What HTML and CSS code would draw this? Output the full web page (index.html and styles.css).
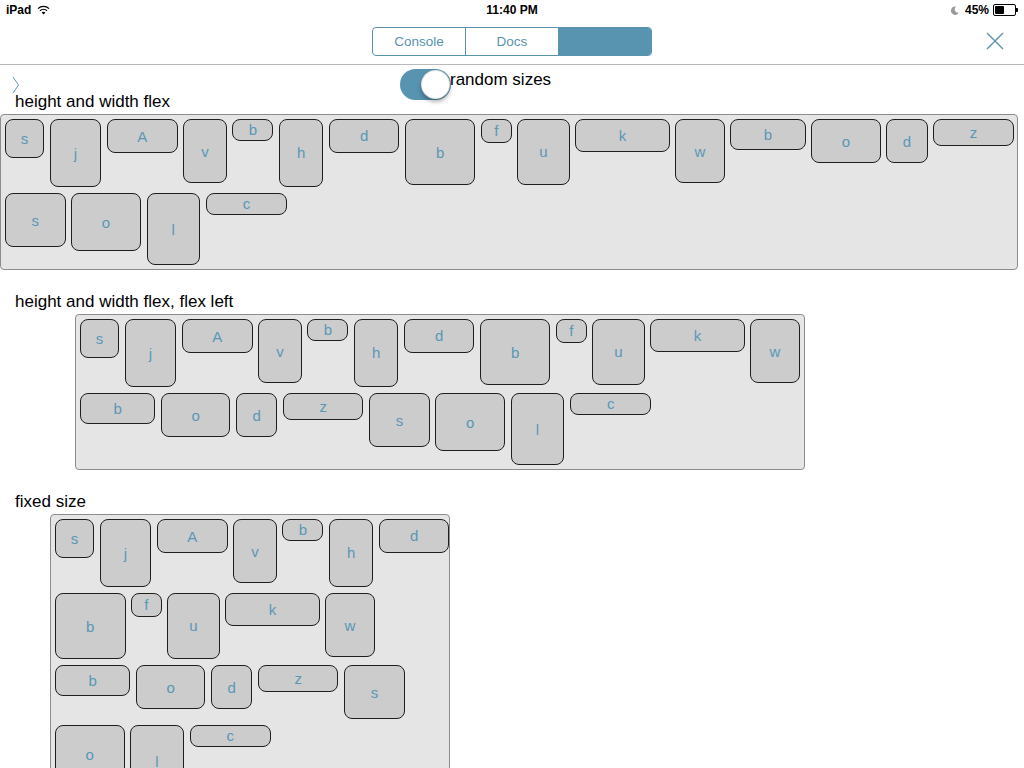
FILE: index.html
```html
<!DOCTYPE html>
<html>
<head>
<meta charset="utf-8">
<link rel="stylesheet" href="styles.css">
</head>
<body>
<div class="status">
  <div class="st-left">
    <span class="st-txt">iPad</span>
    <svg class="wifi" width="13" height="10" viewBox="0 0 13 10">
      <path d="M1 3.6 A8 8 0 0 1 12 3.6" fill="none" stroke="#000" stroke-width="1.3"/>
      <path d="M3 5.7 A5.2 5.2 0 0 1 10 5.7" fill="none" stroke="#000" stroke-width="1.3"/>
      <path d="M6.5 9.6 L4.6 7.6 A2.8 2.8 0 0 1 8.4 7.6 Z" fill="#000"/>
    </svg>
  </div>
  <div class="st-txt st-time">11:40 PM</div>
  <div class="st-right">
    <svg class="moon" width="8" height="9" viewBox="0 0 8 9">
      <path d="M5 0.5 A4.2 4.2 0 1 0 7.8 6.8 A3.6 3.6 0 0 1 5 0.5 Z" fill="#9a9a9a"/>
    </svg>
    <span class="st-txt">45%</span>
    <span class="battery"><span class="batt-fill"></span></span><span class="batt-nub"></span>
  </div>
</div>
<div class="nav">
  <div></div>
  <div class="seg">
    <div class="seg-item">Console</div>
    <div class="seg-item">Docs</div>
    <div class="seg-item seg-on"></div>
  </div>
  <div class="nav-right">
    <svg class="close" width="18" height="18" viewBox="0 0 18 18">
      <path d="M1 1 L17 17 M17 1 L1 17" stroke="#5893b0" stroke-width="1.4" fill="none"/>
    </svg>
  </div>
</div>
<div class="topbar">
  <svg class="chev" width="8" height="18" viewBox="0 0 8 18">
    <path d="M1 1 L6.5 9 L1 17" fill="none" stroke="#5a9abb" stroke-width="1"/>
  </svg>
  <div class="toggle-row">
    <div class="switch"><div class="knob"></div></div>
    <span class="toggle-label">random sizes</span>
  </div>
</div>

<div class="label first">height and width flex</div>
<div class="box box1">
  <div class="row">
    <div class="it s">s</div><div class="it j">j</div><div class="it A">A</div><div class="it v">v</div><div class="it b1">b</div><div class="it h">h</div><div class="it d1">d</div><div class="it b2">b</div><div class="it f">f</div><div class="it u">u</div><div class="it k">k</div><div class="it w">w</div><div class="it b3">b</div><div class="it o1">o</div><div class="it d2">d</div><div class="it z">z</div>
  </div>
  <div class="row">
    <div class="it s2">s</div><div class="it o2">o</div><div class="it l">l</div><div class="it c">c</div>
  </div>
</div>

<div class="label">height and width flex, flex left</div>
<div class="box box2">
  <div class="row">
    <div class="it s">s</div><div class="it j">j</div><div class="it A">A</div><div class="it v">v</div><div class="it b1">b</div><div class="it h">h</div><div class="it d1">d</div><div class="it b2">b</div><div class="it f">f</div><div class="it u">u</div><div class="it k">k</div><div class="it w">w</div>
  </div>
  <div class="row">
    <div class="it b3">b</div><div class="it o1">o</div><div class="it d2">d</div><div class="it z">z</div><div class="it s2">s</div><div class="it o2">o</div><div class="it l">l</div><div class="it c">c</div>
  </div>
</div>

<div class="label">fixed size</div>
<div class="box box3">
  <div class="row">
    <div class="it s">s</div><div class="it j">j</div><div class="it A">A</div><div class="it v">v</div><div class="it b1">b</div><div class="it h">h</div><div class="it d1">d</div>
  </div>
  <div class="row">
    <div class="it b2">b</div><div class="it f">f</div><div class="it u">u</div><div class="it k">k</div><div class="it w">w</div>
  </div>
  <div class="row">
    <div class="it b3">b</div><div class="it o1">o</div><div class="it d2">d</div><div class="it z">z</div><div class="it s2">s</div>
  </div>
  <div class="row">
    <div class="it o2">o</div><div class="it l">l</div><div class="it c">c</div>
  </div>
</div>
</body>
</html>
```

FILE: styles.css
```css
html, body {
  margin: 0;
  padding: 0;
  background: #fff;
  font-family: "Liberation Sans", Arial, Helvetica, sans-serif;
  color: #000;
}

/* status bar */
.status {
  height: 20px;
  display: grid;
  grid-template-columns: 1fr auto 1fr;
  align-items: center;
}
.st-txt {
  font-size: 12px;
  font-weight: bold;
  line-height: 14px;
}
.st-left {
  display: flex;
  align-items: center;
  padding-left: 6px;
}
.wifi {
  margin-left: 6px;
}
.st-right {
  display: flex;
  align-items: center;
  justify-content: flex-end;
  padding-right: 6px;
}
.moon {
  margin-right: 6px;
}
.battery {
  margin-left: 4px;
  width: 19px;
  height: 8px;
  border: 1px solid #000;
  border-radius: 2px;
  padding: 1px;
  box-sizing: content-box;
  display: flex;
}
.batt-fill {
  width: 9px;
  height: 8px;
  background: #000;
  border-radius: 1px;
}
.batt-nub {
  width: 2px;
  height: 4px;
  background: #000;
  border-radius: 0 1px 1px 0;
}

/* nav */
.nav {
  height: 44px;
  border-bottom: 1px solid #b9b9b9;
  display: grid;
  grid-template-columns: 1fr auto 1fr;
  align-items: start;
}
.seg {
  display: flex;
  width: 280px;
  height: 29px;
  margin-top: 7px;
  box-sizing: border-box;
  border: 1px solid #5893b0;
  border-radius: 4px;
  overflow: hidden;
}
.seg-item {
  flex: 1;
  display: flex;
  align-items: center;
  justify-content: center;
  font-size: 13.5px;
  color: #5893b0;
  border-left: 1px solid #5893b0;
}
.seg-item:first-child {
  border-left: none;
}
.seg-on {
  background: #5893b0;
}
.nav-right {
  display: flex;
  justify-content: flex-end;
  padding-top: 12px;
  padding-right: 20px;
}

/* top bar with toggle */
.topbar {
  height: 27px;
  display: flex;
  align-items: flex-start;
}
.chev {
  margin-left: 12px;
  margin-top: 11px;
  flex: none;
}
.toggle-row {
  margin-left: 380px;
  margin-top: 4px;
  display: flex;
  align-items: flex-start;
}
.switch {
  width: 51px;
  height: 31px;
  border-radius: 16px;
  background: #5893b0;
  position: relative;
  flex: none;
}
.knob {
  position: absolute;
  left: 21px;
  top: 1px;
  width: 29px;
  height: 29px;
  border-radius: 50%;
  background: #fff;
  box-sizing: border-box;
  border: 1px solid rgba(0,0,0,0.12);
  box-shadow: 0 3px 4px rgba(0,0,0,0.3);
}
.toggle-label {
  font-size: 17px;
  line-height: 20px;
  margin-top: 1px;
  margin-left: -1px;
}

/* sections */
.label {
  font-size: 17px;
  line-height: 20px;
  padding-left: 15px;
  margin-top: 22px;
  margin-bottom: 2px;
}
.label.first {
  margin-top: 0;
}
.box {
  box-sizing: border-box;
  border: 1px solid #8c8c8c;
  border-radius: 4px;
  background: #e5e5e5;
  padding: 4px;
  display: flex;
  flex-direction: column;
  gap: 6px;
}
.box1 {
  width: 1018px;
}
.box2 {
  width: 730px;
  margin-left: 75px;
}
.box3 {
  width: 400px;
  margin-left: 50px;
}
.row {
  display: flex;
  align-items: flex-start;
  gap: 5.75px;
}
.it {
  flex: none;
  box-sizing: border-box;
  background: #cccccc;
  border: 1px solid #1e1e1e;
  border-radius: 8px;
  display: flex;
  align-items: center;
  justify-content: center;
  font-size: 15px;
  color: #5a97b7;
}
.s  { width: 39px;   height: 39px; }
.j  { width: 51.5px; height: 68px; }
.A  { width: 70.5px; height: 34px; }
.v  { width: 43.4px; height: 64px; }
.b1 { width: 41px;   height: 21.5px; }
.h  { width: 44.3px; height: 67.5px; }
.d1 { width: 70px;   height: 33.5px; }
.b2 { width: 70.5px; height: 66px; }
.f  { width: 30.4px; height: 23.5px; }
.u  { width: 52.2px; height: 65.5px; }
.k  { width: 94.3px; height: 32.5px; }
.w  { width: 49.2px; height: 64px; }
.b3 { width: 75.3px; height: 30.5px; }
.o1 { width: 69.3px; height: 44px; }
.d2 { width: 41.3px; height: 44px; }
.z  { width: 80.3px; height: 27px; }
.s2 { width: 60.5px; height: 54px; }
.o2 { width: 69.5px; height: 58px; }
.l  { width: 53.5px; height: 72px; }
.c  { width: 81.4px; height: 21.5px; }
```
